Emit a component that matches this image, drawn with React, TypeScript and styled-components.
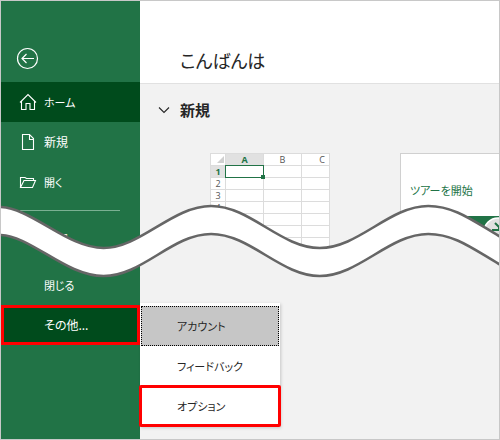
import React from "react";
import styled, { createGlobalStyle, css } from "styled-components";

const Global = createGlobalStyle`
  *, *::before, *::after { box-sizing: border-box; }
  body {
    margin: 0;
    font-family: "Noto Sans CJK JP", sans-serif;
    font-feature-settings: "palt";
    color: #262626;
  }
  button { font: inherit; font-feature-settings: inherit; color: inherit; border: 0; margin: 0; text-align: left; cursor: pointer; }
`;

const Window = styled.div`
  position: relative;
  display: flex;
  min-height: 100vh;
  border: 1px solid #c8c8c8;
  background: #f2f2f2;
  overflow: hidden;
`;

const Sidebar = styled.nav`
  flex: 0 0 139px;
  display: flex;
  flex-direction: column;
  padding-top: 45px;
  background: #217346;
  color: #fff;
`;

const BackButton = styled.button`
  display: flex;
  width: 24px;
  height: 24px;
  margin: 0 0 12px 15px;
  padding: 0;
  background: none;
`;

const NavItem = styled.button<{ $active?: boolean; $marked?: boolean; $kana?: boolean }>`
  display: flex;
  align-items: center;
  gap: 7px;
  height: 40px;
  padding: 0 0 0 18px;
  font-size: ${(p) => (p.$kana ? 11 : 12)}px;
  line-height: 20px;
  white-space: nowrap;
  background: ${(p) => (p.$active ? "#004b1c" : "transparent")};
  ${(p) => p.$marked && css`outline: 3px solid #f00; outline-offset: -3px;`}
`;

const IconSlot = styled.span`
  display: flex;
  justify-content: center;
  width: 18px;
`;

const Divider = styled.hr`
  width: 100px;
  height: 1px;
  margin: 8px 0 8px 19px;
  border: 0;
  background: #7ab092;
`;

const NavFooter = styled.div`
  display: flex;
  flex-direction: column;
  margin-top: 6px;
`;

const Main = styled.main`
  flex: 1;
  min-width: 0;
  display: flex;
  flex-direction: column;
`;

const Header = styled.header`
  height: 83px;
  padding: 44px 0 0 40px;
  background: #fff;
  border-bottom: 1px solid #e1e1e1;
`;

const Greeting = styled.h1`
  margin: 0;
  font-size: 18px;
  line-height: 30px;
  font-weight: 400;
`;

const SectionToggle = styled.button`
  display: flex;
  align-items: center;
  gap: 10px;
  margin: 14px 0 0 18px;
  padding: 0;
  background: none;
`;

const SectionTitle = styled.span`
  font-size: 15px;
  line-height: 24px;
  font-weight: 700;
`;

const Templates = styled.div`
  display: flex;
  align-items: flex-start;
  gap: 70px;
  height: 152px;
  padding: 31px 0 0 70px;
`;

const Sheet = styled.table`
  flex: none;
  width: 120px;
  table-layout: fixed;
  border-collapse: collapse;
  background: #fff;
  font-family: "Open Sans", sans-serif;
  font-size: 9px;
  line-height: 11px;
  color: #555;
  border: 1px solid #d0d0d0;
  clip-path: polygon(0 0, 100% 0, 100% 100%, 55% 100%, 0 70%);
`;

const Cell = styled.td<{ $selected?: boolean }>`
  position: relative;
  height: 12px;
  padding: 0;
  border: 1px solid #dcdcdc;
  ${(p) => p.$selected && css`
    &::before {
      content: "";
      position: absolute;
      inset: -1px;
      border: 1px solid #217346;
    }
    &::after {
      content: "";
      position: absolute;
      right: -2px;
      bottom: -2px;
      width: 4px;
      height: 4px;
      background: #217346;
    }
  `}
`;

const HeadCell = styled.th<{ $on?: boolean; $w?: number; $cut?: boolean }>`
  width: ${(p) => (p.$w ? `${p.$w}px` : "auto")};
  height: 11px;
  padding: ${(p) => (p.$cut ? "0 4px 0 0" : "0")};
  text-align: ${(p) => (p.$cut ? "right" : "center")};
  border: 1px solid #dcdcdc;
  font-weight: ${(p) => (p.$on ? 700 : 400)};
  color: ${(p) => (p.$on ? "#217346" : "#555")};
  background: ${(p) => (p.$on ? "#e1e1e1" : "#fff")};
`;

const Corner = styled.svg`
  display: block;
  margin-left: auto;
`;

const TourCard = styled.a`
  flex: none;
  display: flex;
  flex-direction: column;
  justify-content: space-between;
  width: 120px;
  height: 96px;
  border: 1px solid #d0d0d0;
  background: #fff;
  color: #217346;
  font-size: 11px;
  line-height: 20px;
  text-decoration: none;
  clip-path: polygon(0 0, 100% 0, 100% 100%, 60% 80%, 0 80%);
`;

const TourLabel = styled.span`
  padding: 26px 0 0 9px;
`;

const Menu = styled.div`
  display: flex;
  flex-direction: column;
  width: 140px;
  margin-top: 29px;
  padding: 3px 0 1px;
  background: #fff;
  box-shadow: 1px 1px 3px rgba(0, 0, 0, 0.18);
`;

const MenuItem = styled.button<{ $focused?: boolean; $marked?: boolean }>`
  height: 40px;
  padding: 0 0 0 37px;
  font-size: 11px;
  line-height: 20px;
  background: ${(p) => (p.$focused ? "#c6c6c6" : "#fff")};
  ${(p) => p.$focused && css`margin: 0 1px; padding-left: 35px; border: 1px dotted #000;`}
  ${(p) => p.$marked && css`outline: 3px solid #f00; outline-offset: -2px; border-radius: 1px;`}
`;

const Tear = styled.svg`
  position: absolute;
  top: 199px;
  left: 0;
  width: 100%;
  height: 80px;
  pointer-events: none;
`;

const line = { fill: "none", stroke: "currentColor", strokeWidth: 1.1 };

const BackIcon = () => (
  <svg width="24" height="24" viewBox="0 0 24 24" {...line}>
    <circle cx="11.5" cy="12.5" r="10" strokeWidth="1.2" />
    <path d="M18 12.5H6.5M10.5 8L6 12.5L10.5 17" strokeWidth="1.2" />
  </svg>
);

const HomeIcon = () => (
  <svg width="18" height="18" viewBox="0 0 18 18" {...line}>
    <path d="M1 9.5L9 1.5L17 9.5M2.5 8.5V16.5H7V10.5H11V16.5H15.5V8.5" />
  </svg>
);

const PageIcon = () => (
  <svg width="18" height="18" viewBox="0 0 18 18" {...line}>
    <path d="M3.5 1.5H10.5L14.5 5.5V16.5H3.5ZM10.5 1.5V6.5H14.5" />
  </svg>
);

const FolderIcon = () => (
  <svg width="18" height="18" viewBox="0 0 18 18" {...line}>
    <path d="M1.5 14.5V4.5H6L7.5 5.5H14.5V7.5M1.5 14.5L5 7.5H16.5L13.5 14.5Z" />
  </svg>
);

const columns = ["A", "B", "C"];
const rows = [1, 2, 3, 4, 5, 6, 7];
const wave =
  "C30 7 66 48 103 48S172 6 211 6S281 48 320 48S390 6 429 6C455 6 474 21 500 36";
const waveBack =
  "C474 49 455 34 429 34C390 34 359 76 320 76S250 34 211 34S142 76 103 76S30 35 -2 35Z";

export default function App() {
  return (
    <>
      <Global />
      <Window>
        <Sidebar>
          <BackButton aria-label="戻る"><BackIcon /></BackButton>
          <NavItem $active $kana><IconSlot><HomeIcon /></IconSlot>ホーム</NavItem>
          <NavItem><IconSlot><PageIcon /></IconSlot>新規</NavItem>
          <NavItem $kana><IconSlot><FolderIcon /></IconSlot>開く</NavItem>
          <Divider />
          <NavItem><IconSlot />情報</NavItem>
          <NavFooter>
            <NavItem $kana><IconSlot />閉じる</NavItem>
            <NavItem $active $marked><IconSlot />その他...</NavItem>
          </NavFooter>
        </Sidebar>
        <Main>
          <Header><Greeting>こんばんは</Greeting></Header>
          <SectionToggle aria-expanded="true">
            <svg width="12" height="8" viewBox="0 0 12 8" {...line}>
              <path d="M1 1.5L6 6.5L11 1.5" />
            </svg>
            <SectionTitle>新規</SectionTitle>
          </SectionToggle>
          <Templates>
            <Sheet>
              <thead>
                <tr>
                  <HeadCell $w={15}>
                    <Corner width="9" height="8" viewBox="0 0 9 8"><path d="M8 0V7H1Z" fill="#d0d0d0" /></Corner>
                  </HeadCell>
                  {columns.map((c) => (
                    <HeadCell key={c} $on={c === "A"} $cut={c === "C"} $w={c === "C" ? undefined : 38}>{c}</HeadCell>
                  ))}
                </tr>
              </thead>
              <tbody>
                {rows.map((r) => (
                  <tr key={r}>
                    <HeadCell $on={r === 1}>{r}</HeadCell>
                    {columns.map((c) => <Cell key={c} $selected={r === 1 && c === "A"} />)}
                  </tr>
                ))}
              </tbody>
            </Sheet>
            <TourCard href="#tour">
              <TourLabel>ツアーを開始</TourLabel>
              <svg width="118" height="32" viewBox="0 0 118 32">
                <path d="M0 0H118V32H0Z" fill="#217346" />
                <circle cx="97" cy="16" r="14" fill="#e1e1e1" stroke="#fff" strokeWidth="1.5" />
                <path d="M94 7L98 11V15M91 14H100" fill="none" stroke="#217346" strokeWidth="2" />
              </svg>
            </TourCard>
          </Templates>
          <Menu>
            <MenuItem $focused>アカウント</MenuItem>
            <MenuItem>フィードバック</MenuItem>
            <MenuItem $marked>オプション</MenuItem>
          </Menu>
        </Main>
        <Tear viewBox="0 0 500 80" preserveAspectRatio="none" aria-hidden="true">
          <path d={`M-2 7${wave}L502 37V65L500 64${waveBack}`} fill="#fff" stroke="#666" strokeWidth="2.6" />
        </Tear>
      </Window>
    </>
  );
}
